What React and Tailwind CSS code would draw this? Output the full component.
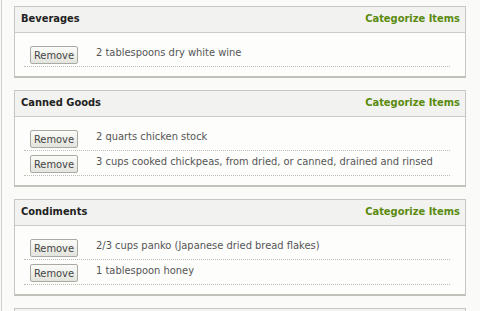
import React from "react";

const sections = [
  { title: "Beverages", items: ["2 tablespoons dry white wine"] },
  {
    title: "Canned Goods",
    items: [
      "2 quarts chicken stock",
      "3 cups cooked chickpeas, from dried, or canned, drained and rinsed",
    ],
  },
  {
    title: "Condiments",
    items: ["2/3 cups panko (Japanese dried bread flakes)", "1 tablespoon honey"],
  },
];

function Panel({ title, items }) {
  return (
    <div className="w-[452px] shrink-0 border border-[#c6c7c0] border-b-2 border-b-[#c0c1ba] bg-[#fdfdfc]">
      <div className="h-[26px] flex items-center justify-between pl-[6px] pr-[5px] bg-[#f2f3f0] border-b border-[#cbccc5]">
        <span className="text-[11px] font-bold text-[#222]">{title}</span>
        <span className="text-[11px] font-bold text-[#5a8a0e]">Categorize Items</span>
      </div>
      <div className="pt-[9px] pb-[9px] pl-[9px] pr-[15px]">
        {items.map((it, i) => (
          <div
            key={i}
            className="flex items-center pt-[4px] pb-[2px] pl-[6px] border-b border-dotted border-[#bdbdb5]"
          >
            <button className="w-[48px] h-[18px] rounded-[2px] border border-[#a9aaa3] bg-gradient-to-b from-[#fbfbf9] to-[#e4e4de] text-[11px] text-[#444] leading-none">
              Remove
            </button>
            <span className="ml-[18px] -mt-[3px] text-[11px] text-[#555]">{it}</span>
          </div>
        ))}
      </div>
    </div>
  );
}

export default function App() {
  return (
    <div
      className="w-[480px] h-[311px] overflow-hidden bg-[#fafaf8]"
      style={{ fontFamily: '"DejaVu Sans Condensed", "DejaVu Sans", sans-serif' }}
    >
      <div className="ml-[1px] h-full border-l border-[#cfd0ca] pl-[12px] pt-[6px] flex flex-col gap-[12px]">
        {sections.map((s) => (
          <Panel key={s.title} {...s} />
        ))}
        <div className="w-[452px] h-[40px] shrink-0 border border-[#c6c7c0] bg-[#f2f3f0]" />
      </div>
    </div>
  );
}
